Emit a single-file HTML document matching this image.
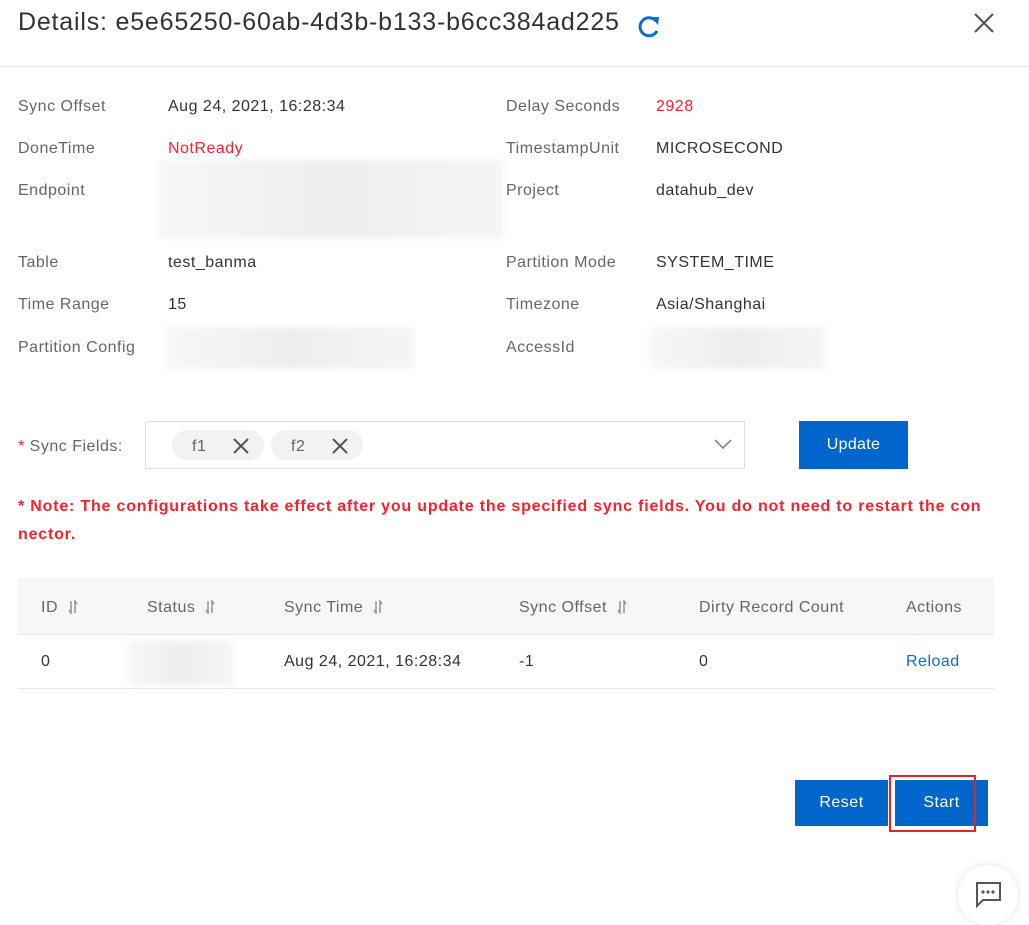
<!DOCTYPE html>
<html><head><meta charset="utf-8"><style>
*{margin:0;padding:0;box-sizing:border-box}
body{width:1029px;height:919px;background:#fff;font-family:"Liberation Sans",sans-serif;color:#333;position:relative;overflow:hidden;font-size:16px;letter-spacing:0.5px}
.a{position:absolute;white-space:nowrap}
.l{color:#666}
.r{color:#f5222d}
.blur{position:absolute;background:linear-gradient(90deg,#f7f7f7,#eee,#f5f5f5);filter:blur(3px)}
.btn{position:absolute;background:#0066cc;color:#fff;font-size:16px;display:flex;align-items:center;justify-content:center}
.sort{display:inline-block;width:10px;height:14px;margin-left:10px;vertical-align:-2px}
</style></head><body>
<div class="a" style="left:18px;top:8px;font-size:25px;letter-spacing:0.8px;color:#333">Details: e5e65250-60ab-4d3b-b133-b6cc384ad225</div>
<svg class="a" style="left:636px;top:12px" width="26" height="28" viewBox="0 0 26 28"><path d="M20 9 A9 9 0 1 0 21 19" fill="none" stroke="#0a6dd6" stroke-width="3"/><path d="M15 5 L23 5 L22 13 Z" fill="#0a6dd6"/></svg>
<svg class="a" style="left:973px;top:12px" width="22" height="22"><path d="M2 2L20 20M20 2L2 20" stroke="#555" stroke-width="2.2"/></svg>
<div class="a" style="left:0;top:66px;width:1029px;height:1px;background:#e8e8e8"></div>

<div class="a l" style="left:18px;top:98px">Sync Offset</div><div class="a" style="left:168px;top:98px">Aug 24, 2021, 16:28:34</div>
<div class="a l" style="left:506px;top:98px">Delay Seconds</div><div class="a r" style="left:656px;top:98px">2928</div>
<div class="a l" style="left:18px;top:140px">DoneTime</div><div class="a r" style="left:168px;top:140px">NotReady</div>
<div class="a l" style="left:506px;top:140px">TimestampUnit</div><div class="a" style="left:656px;top:140px">MICROSECOND</div>
<div class="a l" style="left:18px;top:182px">Endpoint</div><div class="blur" style="left:158px;top:160px;width:345px;height:78px"></div>
<div class="a l" style="left:506px;top:182px">Project</div><div class="a" style="left:656px;top:182px">datahub_dev</div>
<div class="a l" style="left:18px;top:254px">Table</div><div class="a" style="left:168px;top:254px">test_banma</div>
<div class="a l" style="left:506px;top:254px">Partition Mode</div><div class="a" style="left:656px;top:254px">SYSTEM_TIME</div>
<div class="a l" style="left:18px;top:296px">Time Range</div><div class="a" style="left:168px;top:296px">15</div>
<div class="a l" style="left:506px;top:296px">Timezone</div><div class="a" style="left:656px;top:296px">Asia/Shanghai</div>
<div class="a l" style="left:18px;top:339px">Partition Config</div><div class="blur" style="left:165px;top:327px;width:248px;height:42px"></div>
<div class="a l" style="left:506px;top:339px">AccessId</div><div class="blur" style="left:650px;top:327px;width:175px;height:42px"></div>

<div class="a l" style="left:18px;top:438px"><span class="r">*</span> Sync Fields:</div>
<div class="a" style="left:145px;top:421px;width:600px;height:48px;border:1px solid #ddd"></div>
<div class="a" style="left:172px;top:430px;width:92px;height:30px;background:#f2f2f2;border-radius:15px"></div>
<div class="a l" style="left:192px;top:438px">f1</div>
<svg class="a" style="left:233px;top:438px" width="16" height="16"><path d="M1 1L15 15M15 1L1 15" stroke="#555" stroke-width="2"/></svg>
<div class="a" style="left:271px;top:430px;width:92px;height:30px;background:#f2f2f2;border-radius:15px"></div>
<div class="a l" style="left:291px;top:438px">f2</div>
<svg class="a" style="left:332px;top:438px" width="16" height="16"><path d="M1 1L15 15M15 1L1 15" stroke="#555" stroke-width="2"/></svg>
<svg class="a" style="left:714px;top:439px" width="18" height="11"><path d="M1 1L9 9L17 1" stroke="#888" stroke-width="1.6" fill="none"/></svg>
<div class="btn" style="left:799px;top:421px;width:109px;height:48px;letter-spacing:0.3px">Update</div>

<div class="a r" style="left:18px;top:498px;font-weight:bold;font-size:16px;letter-spacing:0.8px">* Note: The configurations take effect after you update the specified sync fields. You do not need to restart the con</div>
<div class="a r" style="left:18px;top:526px;font-weight:bold;font-size:16px;letter-spacing:0.8px">nector.</div>

<div class="a" style="left:18px;top:578px;width:976px;height:57px;background:#f7f7f7;border-bottom:1px solid #e8e8e8"></div>
<div class="a" style="left:18px;top:688px;width:976px;height:1px;background:#e8e8e8"></div>
<div class="a l" style="left:41px;top:599px">ID<svg class="sort" viewBox="0 0 10 14"><path d="M3 1V13L1 10M7 13V1L9 4" stroke="#999" stroke-width="1.6" fill="none"/></svg></div>
<div class="a l" style="left:147px;top:599px">Status<svg class="sort" viewBox="0 0 10 14"><path d="M3 1V13L1 10M7 13V1L9 4" stroke="#999" stroke-width="1.6" fill="none"/></svg></div>
<div class="a l" style="left:284px;top:599px">Sync Time<svg class="sort" viewBox="0 0 10 14"><path d="M3 1V13L1 10M7 13V1L9 4" stroke="#999" stroke-width="1.6" fill="none"/></svg></div>
<div class="a l" style="left:519px;top:599px">Sync Offset<svg class="sort" viewBox="0 0 10 14"><path d="M3 1V13L1 10M7 13V1L9 4" stroke="#999" stroke-width="1.6" fill="none"/></svg></div>
<div class="a l" style="left:699px;top:599px">Dirty Record Count</div>
<div class="a l" style="left:906px;top:599px">Actions</div>
<div class="a" style="left:41px;top:653px">0</div>
<div class="blur" style="left:128px;top:641px;width:105px;height:44px"></div>
<div class="a" style="left:284px;top:653px">Aug 24, 2021, 16:28:34</div>
<div class="a" style="left:519px;top:653px">-1</div>
<div class="a" style="left:699px;top:653px">0</div>
<div class="a" style="left:906px;top:653px;color:#0a6dd6">Reload</div>

<div class="btn" style="left:795px;top:780px;width:93px;height:46px">Reset</div>
<div class="btn" style="left:895px;top:780px;width:93px;height:46px">Start</div>
<div class="a" style="left:889px;top:775px;width:87px;height:57px;border:2px solid #e0262a"></div>

<div class="a" style="left:958px;top:865px;width:60px;height:60px;border-radius:50%;background:#fff;box-shadow:0 0 8px rgba(0,0,0,.12)"></div>
<svg class="a" style="left:974px;top:881px" width="28" height="28" viewBox="0 0 28 28"><path d="M2 2H26V19H9L3 25V2Z" fill="none" stroke="#555" stroke-width="2"/><circle cx="9" cy="11" r="1.6" fill="#555"/><circle cx="14" cy="11" r="1.6" fill="#555"/><circle cx="19" cy="11" r="1.6" fill="#555"/></svg>
</body></html>
